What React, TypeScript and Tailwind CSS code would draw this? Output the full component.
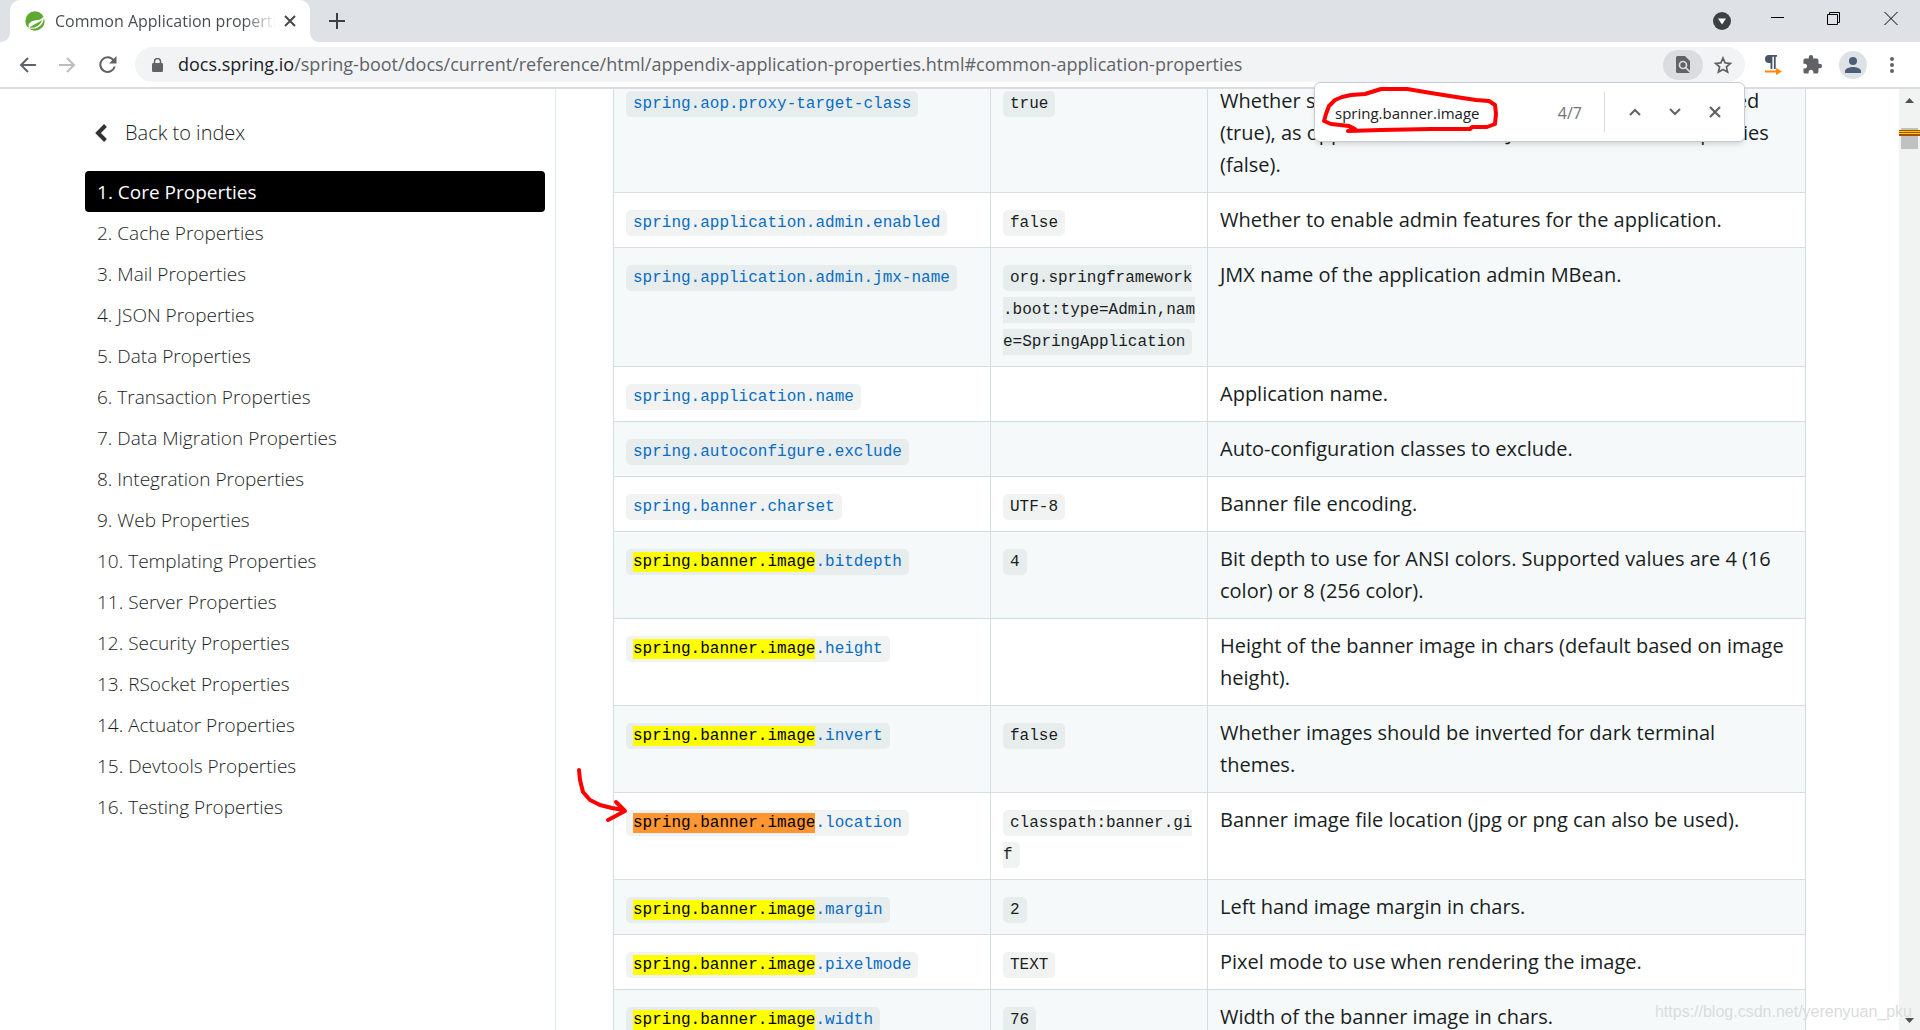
import type { ReactNode } from "react";

const ICON = "#5f6368";

type Row = { prop: string; mark?: "yellow" | "orange"; value?: ReactNode; text: ReactNode };

const rows: Row[] = [
  {
    prop: "spring.aop.proxy-target-class",
    value: "true",
    text: "Whether subclass-based (CGLIB) proxies are to be created (true), as opposed to standard Java interface-based proxies (false).",
  },
  { prop: "spring.application.admin.enabled", value: "false", text: "Whether to enable admin features for the application." },
  {
    prop: "spring.application.admin.jmx-name",
    value: (
      <>
        org.springframework
        <wbr />
        .boot:type=Admin,nam
        <wbr />
        e=SpringApplication
      </>
    ),
    text: "JMX name of the application admin MBean.",
  },
  { prop: "spring.application.name", text: "Application name." },
  { prop: "spring.autoconfigure.exclude", text: "Auto-configuration classes to exclude." },
  { prop: "spring.banner.charset", value: "UTF-8", text: "Banner file encoding." },
  {
    prop: ".bitdepth",
    mark: "yellow",
    value: "4",
    text: "Bit depth to use for ANSI colors. Supported values are 4 (16 color) or 8 (256 color).",
  },
  { prop: ".height", mark: "yellow", text: "Height of the banner image in chars (default based on image height)." },
  { prop: ".invert", mark: "yellow", value: "false", text: "Whether images should be inverted for dark terminal themes." },
  {
    prop: ".location",
    mark: "orange",
    value: (
      <>
        classpath:banner.gi
        <wbr />f
      </>
    ),
    text: "Banner image file location (jpg or png can also be used).",
  },
  { prop: ".margin", mark: "yellow", value: "2", text: "Left hand image margin in chars." },
  { prop: ".pixelmode", mark: "yellow", value: "TEXT", text: "Pixel mode to use when rendering the image." },
  { prop: ".width", mark: "yellow", value: "76", text: "Width of the banner image in chars." },
];

const sections = [
  "Core Properties",
  "Cache Properties",
  "Mail Properties",
  "JSON Properties",
  "Data Properties",
  "Transaction Properties",
  "Data Migration Properties",
  "Integration Properties",
  "Web Properties",
  "Templating Properties",
  "Server Properties",
  "Security Properties",
  "RSocket Properties",
  "Actuator Properties",
  "Devtools Properties",
  "Testing Properties",
];

function TabStrip() {
  return (
    <div className="flex h-[42px] shrink-0 bg-[#dee1e6]">
      <div className="h-full w-[10px] bg-white">
        <div className="h-full rounded-br-[9px] bg-[#dee1e6]" />
      </div>
      <div className="flex h-full w-[300px] items-center rounded-t-[10px] bg-white pl-[15px] pr-[14px]">
        <svg width="20" height="20" viewBox="0 0 20 20" className="shrink-0">
          <circle cx="10" cy="10" r="9.700" fill="#5fa831" />
          <path d="M19 4.500C18 8 14 9 9.500 9.600C5 10.400 3 13.200 3.800 15.800C2.800 16.400 3.400 17.600 5 17.600C12 18.800 18.600 14 19 4.500Z" fill="#fff" />
          <path d="M17 8.500C15 11.500 10 12.500 4.600 16.400C10 17.800 16 14.500 17 8.500Z" fill="#5fa831" />
          <path d="M18.200 6.500C18.400 11 15.500 15.600 10 16.800" fill="none" stroke="#fff" strokeWidth="1.200" />
        </svg>
        <span className="ml-[10px] min-w-0 flex-1 overflow-hidden whitespace-nowrap bg-linear-to-r from-[#45494d] from-85% to-transparent bg-clip-text text-base text-transparent">
          Common Application properties
        </span>
        <button aria-label="Close tab" className="ml-[8px]">
          <svg width="12" height="12" viewBox="0 0 12 12" stroke="#45494d" strokeWidth="2">
            <path d="M1 1l10 10M11 1L1 11" />
          </svg>
        </button>
      </div>
      <div className="h-full w-[10px] bg-white">
        <div className="h-full rounded-bl-[9px] bg-[#dee1e6]" />
      </div>
      <button aria-label="New tab" className="ml-[9px]">
        <svg width="16" height="16" viewBox="0 0 16 16" stroke="#3c4043" strokeWidth="2">
          <path d="M8 0v16M0 8h16" />
        </svg>
      </button>
      <div className="ml-auto flex items-start">
        <button aria-label="Search tabs" className="mr-[40px] mt-[12px]">
          <svg width="18" height="18" viewBox="0 0 18 18">
            <circle cx="9" cy="9" r="9" fill="#3c4043" />
            <path d="M5 6.500h8L9 12.500z" fill="#fff" />
          </svg>
        </button>
        <button aria-label="Minimize" className="mr-[43px] mt-[12px]">
          <svg width="13" height="13" viewBox="0 0 13 13">
            <path d="M0 5.500h13" stroke="#000" />
          </svg>
        </button>
        <button aria-label="Restore" className="mr-[44px] mt-[12px]">
          <svg width="13" height="13" viewBox="0 0 13 13" fill="none" stroke="#000">
            <path d="M.5 2.500h10v10h-10zM2.500 2.500v-2h10v10h-2" />
          </svg>
        </button>
        <button aria-label="Close" className="mr-[22px] mt-[12px]">
          <svg width="14" height="13" viewBox="0 0 14 13" stroke="#000">
            <path d="M.5 0l13 13M13.500 0L.5 13" />
          </svg>
        </button>
      </div>
    </div>
  );
}

function Toolbar() {
  return (
    <div className="flex h-[47px] shrink-0 items-center border-b-2 border-[#dadce0] bg-white pl-[19px]">
      <button aria-label="Back">
        <svg width="17" height="16" viewBox="0 0 17 16" fill="none" stroke={ICON} strokeWidth="2">
          <path d="M17 8H2M9 1L2 8l7 7" />
        </svg>
      </button>
      <button aria-label="Forward" className="ml-[23px]">
        <svg width="17" height="16" viewBox="0 0 17 16" fill="none" stroke="#babcbe" strokeWidth="2">
          <path d="M0 8h15M8 1l7 7-7 7" />
        </svg>
      </button>
      <button aria-label="Reload" className="ml-[23px]">
        <svg width="18" height="17" viewBox="0 0 18 17" fill="none" stroke={ICON} strokeWidth="2">
          <path d="M14.500 4.200A7.300 7.300 0 1 0 15.700 10.500" />
          <path d="M17.500 0v7.500H10z" fill={ICON} stroke="none" />
        </svg>
      </button>
      <div className="ml-[18px] flex h-[35px] min-w-0 flex-1 items-center rounded-full bg-[#f1f3f4] pl-[17px] pr-[13px]">
        <svg width="11" height="14" viewBox="0 0 11 14" className="shrink-0">
          <rect y="5" width="11" height="9" rx="1.200" fill={ICON} />
          <path d="M2.500 6V3.500a3 3 0 0 1 6 0V6" fill="none" stroke={ICON} strokeWidth="1.500" />
        </svg>
        <div className="ml-[15px] min-w-0 flex-1 truncate pb-px text-lg text-[#5f6368]">
          <span className="text-[#202124]">docs.spring.io</span>
          /spring-boot/docs/current/reference/html/appendix-application-properties.html#common-application-properties
        </div>
        <button aria-label="Find in page" className="flex h-[30px] w-10 items-center justify-center rounded-full bg-[#dadce0]">
          <svg width="14" height="17" viewBox="0 0 14 17">
            <path d="M1.500 0H9l5 5v10.500A1.500 1.500 0 0 1 12.500 17h-11A1.500 1.500 0 0 1 0 15.500v-14A1.500 1.500 0 0 1 1.500 0z" fill={ICON} />
            <circle cx="7" cy="9" r="3.500" fill="none" stroke="#dadce0" strokeWidth="1.700" />
            <path d="M9.500 11.500L14 16" stroke="#dadce0" strokeWidth="1.700" />
          </svg>
        </button>
        <button aria-label="Bookmark" className="ml-[11px]">
          <svg width="18" height="18" viewBox="0 0 18 18" fill="none" stroke={ICON} strokeWidth="1.700">
            <path d="M9 2l2.100 4.900 5.300.5-4 3.500 1.200 5.200L9 13.400l-4.600 2.700 1.200-5.200-4-3.500 5.300-.5z" />
          </svg>
        </button>
      </div>
      <button aria-label="Text direction" className="ml-5">
        <svg width="17" height="20" viewBox="0 0 17 20">
          <path d="M4 0h8v1.800h-1.300V14H8.900V1.800H7.400V14H5.500V8H4A4 4 0 0 1 4 0z" fill="#4a5568" />
          <path d="M0 15.500h11v-2.500l6 3.500-6 3.500v-2.500H0z" fill="#f98a0b" />
        </svg>
      </button>
      <button aria-label="Extensions" className="ml-[21px]">
        <svg width="19" height="19" viewBox="1.500 1 21.500 21.500" fill={ICON}>
          <path d="M20.500 11H19V7c0-1.100-.9-2-2-2h-4V3.500a2.500 2.500 0 0 0-5 0V5H4c-1.100 0-1.990.9-1.990 2v3.800H3.500c1.490 0 2.700 1.210 2.700 2.700s-1.210 2.700-2.700 2.700H2V20c0 1.100.9 2 2 2h3.800v-1.500c0-1.490 1.210-2.700 2.700-2.700s2.700 1.210 2.700 2.700V22H17c1.100 0 2-.9 2-2v-4h1.500a2.500 2.500 0 0 0 0-5z" />
        </svg>
      </button>
      <button aria-label="Profile" className="ml-[17px] flex size-7 items-center justify-center rounded-full bg-[#dee1e6]">
        <svg width="16" height="16" viewBox="0 0 16 16" fill="#4d5f78">
          <circle cx="8" cy="4" r="4" />
          <path d="M0 16v-2c0-2.700 5.300-4 8-4s8 1.300 8 4v2z" />
        </svg>
      </button>
      <button aria-label="Menu" className="ml-[23px] mr-[26px]">
        <svg width="4" height="16" viewBox="0 0 4 16" fill={ICON}>
          <circle cx="2" cy="2" r="2" />
          <circle cx="2" cy="8" r="2" />
          <circle cx="2" cy="14" r="2" />
        </svg>
      </button>
    </div>
  );
}

function FindBar() {
  return (
    <div className="absolute right-[175px] top-[82px] flex h-[60px] w-[431px] items-center rounded-md border border-[#c8cacd] bg-white pl-5 shadow-md">
      <input
        aria-label="Find in page"
        defaultValue="spring.banner.image"
        className="min-w-0 flex-1 bg-transparent pt-0.5 text-[15px] text-[#202124] outline-none"
      />
      <span className="pt-0.5 text-base text-[#6f7377]">4/7</span>
      <span className="ml-[22px] h-10 w-px bg-[#dadce0]" />
      <button aria-label="Previous" className="ml-6">
        <svg width="12" height="8" viewBox="0 0 12 8" fill="none" stroke={ICON} strokeWidth="2">
          <path d="M1 7l5-5 5 5" />
        </svg>
      </button>
      <button aria-label="Next" className="ml-7">
        <svg width="12" height="8" viewBox="0 0 12 8" fill="none" stroke={ICON} strokeWidth="2">
          <path d="M1 1l5 5 5-5" />
        </svg>
      </button>
      <button aria-label="Close find bar" className="ml-7 mr-[23px]">
        <svg width="12" height="12" viewBox="0 0 12 12" stroke={ICON} strokeWidth="2.200">
          <path d="M1 1l10 10M11 1L1 11" />
        </svg>
      </button>
      <svg className="pointer-events-none absolute left-[6px] top-[3px]" width="180" height="48" viewBox="0 0 180 48" fill="none" stroke="#f00" strokeWidth="4" strokeLinejoin="round" strokeLinecap="round">
        <path d="M27 45L34 43L28 40L10 38L3 35L5 28L8 20L14 14L21 11L30 9L44 8L60 3L86 3L110 7L135 11L155 14L168 15L174 19L175 28L174 38L166 41L151 41L149 43L110 43L60 44L27 45" />
      </svg>
    </div>
  );
}

function Sidebar() {
  return (
    <nav className="w-[556px] shrink-0 border-r border-[#e1e6e8] pl-[85px] pr-[10px] pt-[29px] text-[#191e1e]">
      <a href="#index" className="flex h-[30px] items-center pl-[10px] text-xl font-[360]">
        <svg width="12" height="18" viewBox="0 0 12 18" fill="none" stroke="#333" strokeWidth="4">
          <path d="M10.500 1.500L3 9l7.500 7.500" />
        </svg>
        <span className="ml-[18px]">Back to index</span>
      </a>
      <ul className="mt-[23px]">
        {sections.map((s, i) => (
          <li key={s}>
            <a
              href={`#section-${i + 1}`}
              className={
                i === 0
                  ? "flex h-[41px] items-center rounded bg-black px-3 pt-0.5 text-[19px] text-white"
                  : "flex h-[41px] items-center px-3 pt-0.5 text-[19px] font-[360]"
              }
            >
              {i + 1}. {s}
            </a>
          </li>
        ))}
      </ul>
    </nav>
  );
}

function Code({ children }: { children: ReactNode }) {
  return (
    <code className="rounded-[5px] bg-[#191e1e]/6 px-[7px] py-1 font-['Liberation_Mono',monospace] text-base leading-none">
      {children}
    </code>
  );
}

function PropertyTable() {
  return (
    <table className="-mt-4 w-full table-fixed border-collapse border border-[#d3dfdf] text-xl leading-8 text-[#191e1e]">
      <colgroup>
        <col className="w-[377px]" />
        <col className="w-[217px]" />
        <col />
      </colgroup>
      <tbody>
        {rows.map((r) => (
          <tr key={r.prop} className="align-top odd:bg-[#f5f9fa]">
            <td className="border border-[#d3dfdf] px-3 py-[11px]">
              <a href={`#${r.prop}`} className="text-[#086dc3]">
                <Code>
                  {r.mark && (
                    <mark className={r.mark === "orange" ? "bg-[#ff9632] py-px text-black" : "bg-[#ffff00] py-px text-black"}>
                      spring.banner.image
                    </mark>
                  )}
                  {r.prop}
                </Code>
              </a>
            </td>
            <td className="border border-[#d3dfdf] px-3 py-[11px]">{r.value && <Code>{r.value}</Code>}</td>
            <td className="border border-[#d3dfdf] px-3 py-[11px]">{r.text}</td>
          </tr>
        ))}
      </tbody>
    </table>
  );
}

function Scrollbar() {
  return (
    <div className="flex w-[21px] shrink-0 flex-col items-center justify-between bg-[#f1f3f3] pb-[7px] pt-[9px]">
      <div className="flex w-full flex-col items-center">
        <svg width="9" height="5" viewBox="0 0 9 5" fill="#505050">
          <path d="M4.500 0L9 5H0z" />
        </svg>
        <div className="mt-[25px] flex h-[21px] w-full flex-col px-[2px]">
          <div className="flex flex-1 flex-col bg-[#c1c1c1] pt-[2px]">
            <div className="-mx-[2px] flex flex-col">
              <div className="h-px bg-[#a35200]" />
              <div className="h-px bg-[#ffc800]" />
              <div className="h-px bg-[#a35200]" />
              <div className="h-px bg-[#ffc800]" />
              <div className="h-[2px] bg-[#a35200]" />
            </div>
          </div>
        </div>
      </div>
      <svg width="9" height="5" viewBox="0 0 9 5" fill="#505050">
        <path d="M0 0h9L4.500 5z" />
      </svg>
    </div>
  );
}

export default function App() {
  return (
    <div className="relative flex h-screen flex-col overflow-hidden bg-white font-['Open_Sans',sans-serif]">
      <TabStrip />
      <Toolbar />
      <div className="flex min-h-0 flex-1">
        <Sidebar />
        <main className="min-w-0 flex-1 overflow-hidden pl-[57px] pr-[93px]">
          <PropertyTable />
        </main>
        <Scrollbar />
      </div>
      <FindBar />
      <svg className="pointer-events-none absolute left-[576px] top-[766px]" width="52" height="58" viewBox="0 0 52 58" fill="none" stroke="#f00" strokeWidth="4" strokeLinejoin="round" strokeLinecap="round">
        <path d="M3 4L4 14L7 26L14 34L24 39L36 42L47 44M40 36L49 45L32 54" />
      </svg>
      <div className="pointer-events-none absolute bottom-1.5 right-2 font-['Liberation_Sans',sans-serif] text-base text-[#d9dcdd]">
        https://blog.csdn.net/yerenyuan_pku
      </div>
    </div>
  );
}
